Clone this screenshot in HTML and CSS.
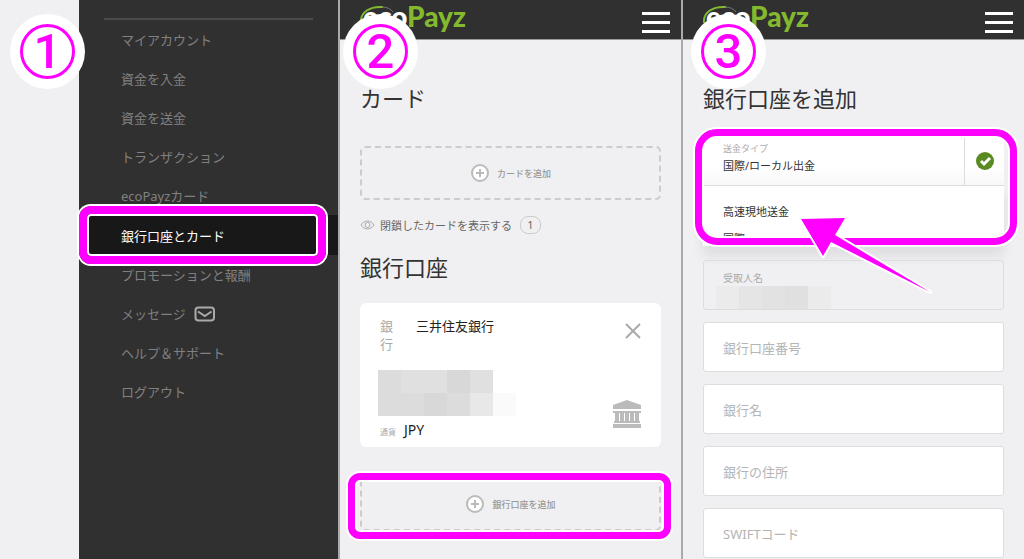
FILE: index.html
```
<!DOCTYPE html>
<html lang="ja">
<head>
    <meta charset="UTF-8">
    <meta name="viewport" content="width=device-width, initial-scale=1.0">
    <title>ecoPayz 銀行口座を追加</title>
    <link rel="stylesheet" href="styles.css">
</head>
<body>
    <div class="steps">
        <!-- 1: メニュー -->
        <section class="panel menu-panel">
            <span class="step">1</span>
            <nav class="menu">
                <a href="#">マイアカウント</a>
                <a href="#">資金を入金</a>
                <a href="#">資金を送金</a>
                <a href="#">トランザクション</a>
                <a href="#">ecoPayzカード</a>
                <a href="#" class="active">銀行口座とカード<span class="ring"></span></a>
                <a href="#">プロモーションと報酬</a>
                <a href="#">メッセージ
                    <svg class="mail" width="22" height="16" viewBox="0 0 22 16">
                        <rect x="1.5" y="1.5" width="18.5" height="13" rx="3"/>
                        <path d="M4 5.5l6.800 4.500 6.800-4.500"/>
                    </svg>
                </a>
                <a href="#">ヘルプ＆サポート</a>
                <a href="#">ログアウト</a>
            </nav>
        </section>

        <!-- 2: カードと銀行口座 -->
        <section class="panel cards-panel">
            <span class="step">2</span>
            <header class="topbar">
                <a href="#" class="logo">
                    <svg class="swirl" width="36" height="20" viewBox="0 0 36 20">
                        <path class="swirl-green" d="M1 18C0 7 10 1 23 2"/>
                        <path class="swirl-gray" d="M22 2c5 0 9 2 11 5"/>
                    </svg>
                    <span>eco</span>Payz
                </a>
                <button class="burger" aria-label="メニュー"><i></i><i></i><i></i></button>
            </header>
            <main class="content">
                <h2>カード</h2>
                <button class="add">
                    <svg width="20" height="20" viewBox="0 0 20 20"><circle cx="10" cy="10" r="8"/><path d="M10 6v8M6 10h8"/></svg>
                    カードを追加
                </button>
                <a href="#" class="closed">
                    <svg width="15" height="10" viewBox="0 0 15 10">
                        <path d="M1 5c3-5.200 10-5.200 13 0c-3 5.200-10 5.200-13 0z"/><circle cx="7.500" cy="5" r="2.500"/>
                    </svg>
                    閉鎖したカードを表示する
                    <span class="count">1</span>
                </a>
                <h2>銀行口座</h2>
                <div class="account">
                    <div class="account-head">
                        <span class="account-label">銀行</span>
                        <span class="account-name">三井住友銀行</span>
                        <button class="close" aria-label="削除">
                            <svg width="16" height="16" viewBox="0 0 16 16"><path d="M1 1l14 14M15 1L1 15"/></svg>
                        </button>
                    </div>
                    <div class="account-body">
                        <div class="mosaic">
                            <i class="m3"></i><i class="m2"></i><i class="m2"></i><i class="m4"></i><i class="m2"></i><i></i>
                            <i class="m3"></i><i class="m3"></i><i class="m4"></i><i class="m3"></i><i class="m1"></i><i class="m0"></i>
                        </div>
                        <svg class="bank" width="28" height="28" viewBox="0 0 28 28">
                            <path d="M14 0L28 5v4H0V5zM0 11h28v2H0zM2 13h4v9H2zM7 13h4v9H7zM12 13h4v9h-4zM17 13h4v9h-4zM22 13h4v9h-4zM1 21h26v2H1zM0 24h28v4H0z"/>
                        </svg>
                    </div>
                    <div class="currency"><small>通貨</small>JPY</div>
                </div>
                <button class="add add-bank">
                    <svg width="20" height="20" viewBox="0 0 20 20"><circle cx="10" cy="10" r="8"/><path d="M10 6v8M6 10h8"/></svg>
                    銀行口座を追加
                    <span class="ring"></span>
                </button>
            </main>
        </section>

        <!-- 3: 銀行口座を追加 -->
        <section class="panel form-panel">
            <span class="step">3</span>
            <header class="topbar">
                <a href="#" class="logo">
                    <svg class="swirl" width="36" height="20" viewBox="0 0 36 20">
                        <path class="swirl-green" d="M1 18C0 7 10 1 23 2"/>
                        <path class="swirl-gray" d="M22 2c5 0 9 2 11 5"/>
                    </svg>
                    <span>eco</span>Payz
                </a>
                <button class="burger" aria-label="メニュー"><i></i><i></i><i></i></button>
            </header>
            <form class="content">
                <h2>銀行口座を追加</h2>
                <div class="dropdown">
                    <div class="dropdown-head">
                        <div class="dropdown-value">
                            <label for="type">送金タイプ</label>
                            <select id="type">
                                <option>国際/ローカル出金</option>
                                <option>高速現地送金</option>
                            </select>
                        </div>
                        <div class="check">
                            <svg width="18" height="18" viewBox="0 0 18 18"><circle cx="9" cy="9" r="9"/><path d="M5 9l3 3 6-6"/></svg>
                        </div>
                    </div>
                    <ul class="options">
                        <li>高速現地送金</li>
                        <li class="cut">国際</li>
                    </ul>
                    <span class="ring"></span>
                    <svg class="arrow" width="140" height="86" viewBox="0 0 140 86">
                        <path d="M5 7L49 6L39 23L134 80L35 30L27 44z"/>
                    </svg>
                </div>
                <div class="field locked">
                    <label for="payee">受取人名</label>
                    <input id="payee" type="text" disabled>
                    <div class="mosaic">
                        <i class="m1"></i><i class="m2"></i><i class="m3"></i><i class="m4"></i><i class="m1"></i>
                    </div>
                </div>
                <input class="field" type="text" placeholder="銀行口座番号" aria-label="銀行口座番号">
                <input class="field" type="text" placeholder="銀行名" aria-label="銀行名">
                <input class="field" type="text" placeholder="銀行の住所" aria-label="銀行の住所">
                <input class="field" type="text" placeholder="SWIFTコード" aria-label="SWIFTコード">
            </form>
        </section>
    </div>
</body>
</html>
```

FILE: styles.css
```
* {
    box-sizing: border-box;
}
body {
    margin: 0;
    font-family: "Noto Sans", "Noto Sans CJK JP", sans-serif;
    font-size: 13px;
    color: #333;
    background-color: #f0f0f2;
    overflow: hidden;
}
button, input, select {
    font-family: inherit;
    margin: 0;
}
a {
    color: inherit;
    text-decoration: none;
}
svg {
    fill: none;
    flex: none;
}
.steps {
    display: grid;
    grid-template-columns: 340fr 343fr 341fr;
    height: 100vh;
}
.panel {
    position: relative;
    min-width: 0;
}
.menu-panel, .cards-panel {
    border-right: 2px solid #aaa;
}

/* 番号バッジ */
.step {
    position: absolute;
    z-index: 3;
    top: 14px;
    left: 3px;
    width: 75px;
    height: 75px;
    border-radius: 50%;
    background-color: #fff;
    color: #f0f;
    font: 500 49px/76px Roboto, sans-serif;
    text-align: center;
}
.step::after {
    content: "";
    position: absolute;
    inset: 10px;
    border: 3px solid #f0f;
    border-radius: 50%;
}
.menu-panel .step {
    left: 10px;
}
.form-panel .step {
    left: 8px;
}

/* 強調枠 */
.ring {
    position: absolute;
    z-index: 2;
    border: 8px solid #f0f;
    border-radius: 12px;
    box-shadow: 0 0 0 2px #fff, inset 0 0 0 2px #fff;
    pointer-events: none;
}

/* メニュー */
.menu-panel {
    padding-left: 79px;
}
.menu {
    height: 100%;
    padding-top: 18px;
    background-color: #303030;
    color: #808080;
}
.menu::before {
    content: "";
    display: block;
    height: 2px;
    margin: 0 25px;
    background-color: #4b4b4b;
}
.menu a {
    position: relative;
    display: flex;
    align-items: center;
    gap: 8px;
    height: 39px;
    padding-left: 42px;
}
.menu .active {
    height: 40px;
    background-color: #181818;
    color: #fff;
}
.menu .ring {
    inset: -9px 12px -9px 0;
}
.mail {
    stroke: #aaa;
    stroke-width: 2;
}

/* ヘッダー */
.topbar {
    display: flex;
    justify-content: space-between;
    height: 40px;
    padding: 0 11px 0 20px;
    background-color: #303030;
    border-bottom: 1px solid #999;
}
.logo {
    position: relative;
    padding-left: 3px;
    color: #84b92f;
    font: 900 28px/32px Lato, sans-serif;
}
.logo span {
    color: #fff;
}
.swirl {
    position: absolute;
    top: 5px;
    left: 0;
}
.swirl-green {
    stroke: #84b92f;
    stroke-width: 2;
}
.swirl-gray {
    stroke: #777;
}
.burger {
    display: flex;
    flex-direction: column;
    gap: 6px;
    width: 28px;
    padding: 12px 0 0;
    border: 0;
    background: none;
}
.burger i {
    width: 28px;
    height: 3px;
    background-color: #fff;
}

.content {
    padding: 42px 20px 0;
}
h2 {
    margin: 0;
    font-size: 22px;
    font-weight: normal;
    line-height: 32px;
}

/* カード・銀行口座 */
.add {
    position: relative;
    display: flex;
    align-items: center;
    justify-content: center;
    gap: 7px;
    width: 100%;
    height: 54px;
    margin-top: 32px;
    border: 2px dashed #ccc;
    border-radius: 5px;
    background: none;
    color: #999;
    font-size: 9px;
    font-weight: 500;
}
.add svg {
    stroke: #bbb;
    stroke-width: 2;
}
.add circle {
    fill: #fff;
}
.add-bank {
    margin-top: 30px;
}
.add-bank .ring {
    inset: -6px -12px -10px -14px;
    border-width: 7px;
}
.closed {
    display: flex;
    align-items: center;
    gap: 5px;
    height: 18px;
    margin: 16px 0 17px;
    color: #666;
    font-size: 11px;
}
.closed svg {
    stroke: #aaa;
}
.count {
    width: 21px;
    margin-left: 3px;
    border: 1px solid #ccc;
    border-radius: 8px;
    line-height: 16px;
    text-align: center;
}
.account {
    margin-top: 20px;
    padding: 14px 20px 0 18px;
    height: 144px;
    border-radius: 6px;
    background-color: #fff;
}
.account-head {
    display: flex;
    align-items: flex-start;
    line-height: 18px;
    padding-left: 2px;
}
.account-label {
    width: 13px;
    margin-right: 23px;
    color: #aaa;
}
.account-name {
    flex: 1;
    color: #222;
}
.close {
    padding: 6px 0 0;
    border: 0;
    background: none;
    line-height: 0;
}
.close svg {
    stroke: #aaa;
    stroke-width: 2;
}
.account-body {
    display: flex;
    justify-content: space-between;
    margin-top: 17px;
}
.mosaic {
    display: grid;
    grid-template-columns: repeat(6, 23px);
    grid-auto-rows: 23px;
}
.m0 {
    background-color: #fafafa;
}
.m1 {
    background-color: #e8e8e8;
}
.m2 {
    background-color: #e0e0e0;
}
.m3 {
    background-color: #dcdcdc;
}
.m4 {
    background-color: #d8d8d8;
}
.bank {
    margin-top: 30px;
    fill: #bbb;
}
.currency {
    padding-left: 2px;
    margin-top: -8px;
    color: #222;
    font-size: 14px;
    line-height: 20px;
}
.currency small {
    margin-right: 8px;
    color: #aaa;
    font-size: 8px;
}

/* 入力フォーム */
.dropdown {
    position: relative;
    height: 112px;
    margin-top: 22px;
    margin-bottom: 12px;
}
.dropdown-head {
    display: flex;
    height: 50px;
    border-bottom: 1px solid #ddd;
    background: linear-gradient(#fff 60%, #f8f8f8);
}
.dropdown-value {
    flex: 1;
    padding: 7px 20px 0;
}
.dropdown-value label {
    display: block;
    color: #aaa;
    font-size: 9px;
    line-height: 12px;
}
.dropdown-value select {
    appearance: none;
    display: block;
    width: 100%;
    height: 20px;
    padding: 0;
    border: 0;
    background: none;
    color: #333;
    font-size: 11px;
}
.check {
    display: flex;
    align-items: center;
    justify-content: center;
    width: 40px;
    border-left: 1px solid #ddd;
}
.check circle {
    fill: #5a8a22;
}
.check path {
    stroke: #fff;
    stroke-width: 3;
}
.options {
    height: 60px;
    margin: 0;
    padding: 0;
    list-style: none;
    background-color: #fff;
    box-shadow: 0 10px 12px rgba(0, 0, 0, 0.08);
    font-size: 11px;
    line-height: 16px;
}
.options li {
    padding: 18px 20px 0;
}
.options .cut {
    height: 17px;
    padding-top: 11px;
    border-bottom: 1px solid #ddd;
    overflow: hidden;
}
.dropdown .ring {
    inset: -7px -13px 3px -8px;
    border-width: 7px;
    border-radius: 22px;
}
.arrow {
    position: absolute;
    z-index: 3;
    top: 76px;
    left: 93px;
}
.arrow path {
    fill: #f0f;
    stroke: #fff;
    stroke-width: 4;
    stroke-linejoin: round;
    paint-order: stroke;
}
.field {
    display: block;
    width: 100%;
    height: 50px;
    margin-bottom: 12px;
    padding: 2px 19px 0;
    border: 1px solid #ddd;
    border-radius: 3px;
    background-color: #fff;
    font-size: 13px;
}
.field::placeholder {
    color: #b5b5b5;
}
.locked {
    position: relative;
    background: none;
}
.locked label {
    display: block;
    padding-top: 7px;
    color: #aaa;
    font-size: 10px;
    line-height: 16px;
}
.locked input {
    display: block;
    width: 100%;
    height: 22px;
    border: 0;
    background: none;
}
.locked .mosaic {
    position: absolute;
    left: 12px;
    bottom: 0;
}
.locked .mosaic i {
    opacity: 0.7;
}
```
